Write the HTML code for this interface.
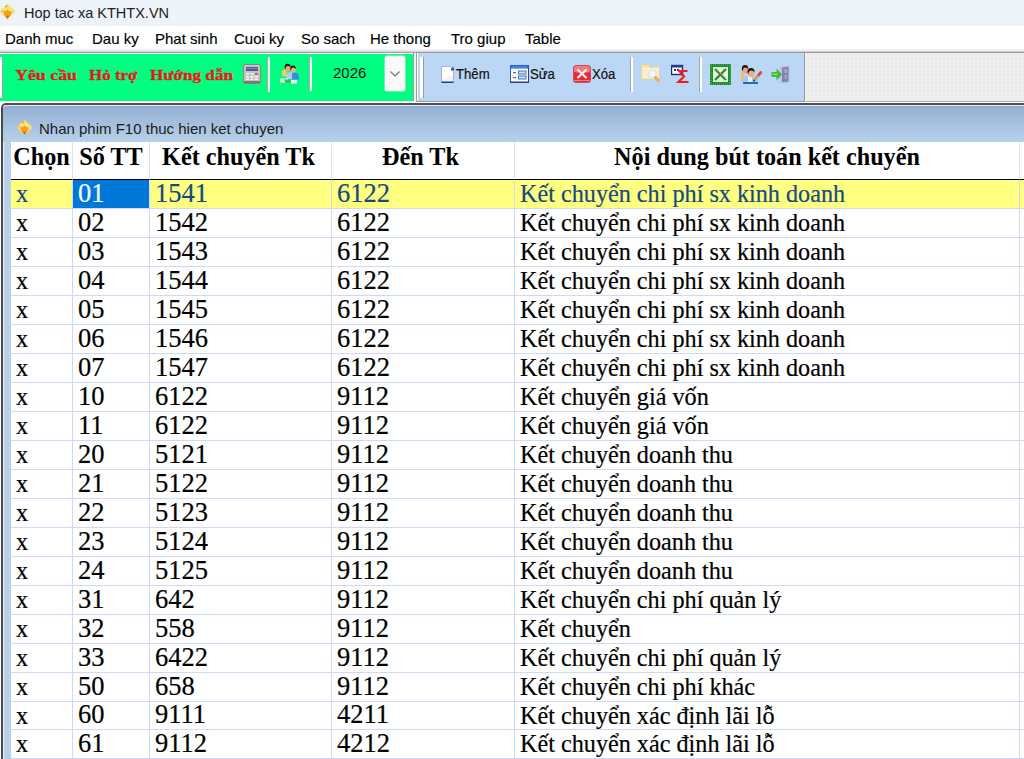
<!DOCTYPE html>
<html><head><meta charset="utf-8">
<style>
*{margin:0;padding:0;box-sizing:border-box}
html,body{width:1024px;height:759px;overflow:hidden;background:#fff;font-family:"Liberation Sans",sans-serif}
.abs{position:absolute}
#title{left:0;top:0;width:1024px;height:26px;background:#eef2f9}
#title .t{left:24px;top:3px;font-size:14.5px;color:#222;white-space:nowrap;line-height:20px}
#menu{left:0;top:26px;width:1024px;height:23px;background:#fff}
#menu span{position:absolute;top:4px;font-size:15px;line-height:18px;color:#000;white-space:nowrap;-webkit-text-stroke:0.15px #000}
#band{left:0;top:49px;width:1024px;height:54px;background:#e6e6e6}
#green{left:0;top:53px;width:415px;height:49px;background:#00f582;border-top:1px solid #8a8a8a;border-bottom:1px solid #fff}
#blue{left:416px;top:52px;width:390px;height:50px;background:#bdd7f5;border:1px solid #8c8c8c;border-right:2px solid #a0a0a0;border-bottom:1px solid #fff}
#rest{left:806px;top:53px;width:218px;height:49px;background:#efefef;border-top:1px solid #8c8c8c}
.red{color:#f0141e;font-family:"Liberation Serif",serif;font-weight:bold;font-size:15px;line-height:18px;white-space:nowrap;-webkit-text-stroke:0.3px #f0141e;transform-origin:0 0}
.sep{width:3px;border-left:2px solid #fff;border-right:1px solid #9a9a9a}
.tb{font-size:14px;color:#111;line-height:16px;white-space:nowrap;transform:scaleX(0.94);transform-origin:0 0;-webkit-text-stroke:0.2px #111}
#win{left:1px;top:103px;width:1030px;height:660px;background:#b8d0ea;border-left:2px solid #4a4a4a;border-top:2px solid #505050;border-top-left-radius:5px;box-shadow:inset 1px 0 0 #e4eef8}
#cap{left:3px;top:105px;width:1021px;height:37px;background:linear-gradient(#92afd2,#b8d1ea);border-top:1px solid #dde8f4;border-top-left-radius:4px}
#cap .t{left:36px;top:14px;font-size:15px;line-height:18px;color:#1a1a1a;white-space:nowrap}
#grid{left:11px;top:142px;width:1013px;height:617px;background:#fff;overflow:hidden}
table{border-collapse:separate;border-spacing:0;font-family:"Liberation Serif",serif;font-size:24.2px;table-layout:fixed;width:1030px}
td,th{border-right:1px solid #cfd8f6;border-bottom:1px solid #cfd8f6;white-space:nowrap;overflow:hidden;box-sizing:border-box}
th{height:38px;font-weight:bold;text-align:center;border-right:1px solid #e3e3e3;border-bottom:1px solid #000;vertical-align:middle;padding:0 0 7px 0;line-height:30px}
td{height:29px;padding:0 0 0 5px;line-height:28px;color:#000;vertical-align:middle;-webkit-text-stroke:0.2px currentColor}
td:nth-child(2),td:nth-child(3),td:nth-child(4){font-size:26.5px;padding-bottom:2px;line-height:26px}
tr.r28 td{height:28px;line-height:27px}
tr.r28 td:nth-child(2),tr.r28 td:nth-child(3),tr.r28 td:nth-child(4){line-height:25px}
tr.sel td{background:#ffff80;color:#134a80}
tr.sel td.cur{background:#0078d7;color:#fff}
</style></head><body>
<div id="title" class="abs">
  <svg class="abs" style="left:-1px;top:3px" width="18" height="18" viewBox="0 0 17 17">
 <path d="M8 0.5 L15.5 8 L8 15.5 L0.5 8Z" fill="#f2dc6a"/>
 <path d="M8 1.5 L14.5 8 L8 14.5 L1.5 8Z" fill="#f6e67c"/>
 <path d="M4 9 L5 7 L7 7.5 L8 6 L9.5 7.5 L11.5 7.5 L12 9.5 L10.5 12 L8 13.5 L5.5 12Z" fill="#f7a020"/>
 <path d="M6 12 L10 12 L8 15Z" fill="#d86a1a"/>
 <circle cx="7" cy="3" r="0.9" fill="#f08a20"/>
 <circle cx="3" cy="7.5" r="0.7" fill="#f08a20"/>
</svg>
  <div class="t abs">Hop tac xa KTHTX.VN</div>
</div>
<div id="menu" class="abs">
  <span style="left:5px">Danh muc</span>
  <span style="left:92px">Dau ky</span>
  <span style="left:155px">Phat sinh</span>
  <span style="left:234px">Cuoi ky</span>
  <span style="left:301px">So sach</span>
  <span style="left:370px">He thong</span>
  <span style="left:451px">Tro giup</span>
  <span style="left:525px">Table</span>
</div>
<div class="abs" style="left:0;top:49px;width:1024px;height:54px;background:#f0f0f0"></div>
<div class="abs" style="left:0;top:51px;width:1024px;height:1px;background:#d0d0d0"></div>
<div class="abs" style="left:0;top:52px;width:1024px;height:1px;background:#a4a4a4"></div>
<div class="abs" style="left:0;top:53px;width:414px;height:1px;background:#fff"></div>
<div class="abs" style="left:0;top:54px;width:413px;height:47px;background:#00ff80"></div>
<div class="abs" style="left:413px;top:52px;width:1px;height:50px;background:#9a9a9a"></div>
<div class="abs" style="left:0;top:101px;width:414px;height:1px;background:#fbeef4"></div>
<div class="abs" style="left:0;top:57px;width:3px;height:41px;background:#fff;border-right:1px solid #a0a0a0"></div>
<div class="abs red" style="left:15px;top:66px;transform:scaleX(1.19)">Yêu cầu</div>
<div class="abs red" style="left:89px;top:66px;transform:scaleX(1.13)">Hỏ trợ</div>
<div class="abs red" style="left:150px;top:66px;transform:scaleX(1.14)">Hướng dẫn</div>
<svg class="abs" style="left:243px;top:64px" width="18" height="20" viewBox="0 0 18 20">
 <rect x="0.5" y="0.5" width="17" height="19" rx="1.5" fill="#c4c4c4" stroke="#8a8a8a"/>
 <rect x="1" y="17" width="16" height="2.5" fill="#7a7a7a"/>
 <rect x="3" y="3" width="12" height="4" fill="#44608e"/>
 <rect x="3" y="4" width="12" height="1" fill="#6f8fbf"/>
 <g fill="#f4f4f4"><rect x="3" y="9" width="3" height="1.5"/><rect x="7.5" y="9" width="3" height="1.5"/><rect x="3" y="12" width="3" height="1.5"/><rect x="7.5" y="12" width="3" height="1.5"/><rect x="12" y="12" width="3" height="1.5"/><rect x="3" y="14.5" width="3" height="1.5"/><rect x="7.5" y="14.5" width="3" height="1.5"/><rect x="12" y="14.5" width="3" height="1.5"/></g>
 <rect x="12" y="9" width="3" height="1.5" fill="#e04040"/>
</svg>
<div class="abs" style="left:267px;top:57px;width:3px;height:35px;background:#fff;border-left:1px solid #a8a8a8"></div>
<svg class="abs" style="left:279px;top:63px" width="21" height="22" viewBox="0 0 21 22">
 <ellipse cx="5.5" cy="10" rx="2.6" ry="3.6" fill="#f4d050"/>
 <ellipse cx="8.6" cy="5" rx="2.9" ry="3.6" fill="#e4a878"/>
 <path d="M5.6 5 Q5.4 0.8 8.6 0.8 Q11.8 0.8 11.6 4.5 Q10.5 2.6 8.6 2.8 Q6.6 3 6.4 6Z" fill="#1e1410"/>
 <path d="M7.3 16 L7.3 10.5 Q10 8.5 13.6 9.5 L13.6 16Z" fill="#a8d0f8"/>
 <path d="M13 16.5 L13 10 Q16.5 8.5 19.5 11 L20 16.5Z" fill="#3c8ae8"/>
 <ellipse cx="14" cy="6.3" rx="2.8" ry="3.4" fill="#eab484"/>
 <path d="M11.2 6.5 Q11 2.5 14 2.5 Q17 2.5 16.8 6 Q15.8 4.3 14 4.5 Q12.2 4.7 12 7.5Z" fill="#1a120e"/>
 <rect x="1" y="15.5" width="8" height="4" fill="#eef2f4"/>
 <path d="M5 16.5 L12 16.5 L13 20 L6.5 20Z" fill="#2cc45a"/>
 <rect x="12" y="17" width="6" height="3.5" fill="#eef0f4"/>
</svg>
<div class="abs" style="left:309px;top:57px;width:3px;height:34px;background:#fff;border-left:1px solid #a8a8a8"></div>
<div class="abs" style="left:333px;top:64px;font-size:15px;line-height:18px;color:#111">2026</div>
<div class="abs" style="left:385px;top:56px;width:20px;height:35px;background:#f9f9f9;border-radius:2px;box-shadow:0 0 0 0.5px #e0e0e0"></div>
<svg class="abs" style="left:389px;top:70px" width="12" height="8" viewBox="0 0 12 8"><path d="M1.5 1.5 L6 6 L10.5 1.5" fill="none" stroke="#777" stroke-width="1.2"/></svg>

<div class="abs" style="left:416px;top:52px;width:389px;height:50px;background:#bcd7f5;border:1px solid #999;border-left-color:#a0a0a0"></div>
<div class="abs" style="left:417px;top:53px;width:1px;height:48px;background:#fff"></div>
<div class="abs" style="left:420px;top:57px;width:4px;height:41px;background:#fff;border-right:1px solid #9a9a9a"></div>
<svg class="abs" style="left:441px;top:66px" width="14" height="17" viewBox="0 0 14 17">
 <path d="M0.5 0.5 L10 0.5 L12.5 3 L12.5 16.5 L0.5 16.5Z" fill="#ffffff" stroke="#a4b4dc"/>
 <path d="M1 14 L12 9 L12 16 L1 16Z" fill="#f0f2fa"/>
 <rect x="0.5" y="15.5" width="12" height="1.5" fill="#1e3a80"/>
 <circle cx="11.5" cy="3" r="1.7" fill="#2a4a8c"/>
 <circle cx="11" cy="2.6" r="0.6" fill="#c0d0f0"/>
</svg>
<div class="abs tb" style="left:456px;top:66px">Thêm</div>
<svg class="abs" style="left:510px;top:65px" width="19" height="18" viewBox="0 0 19 18">
 <rect x="0.5" y="0.5" width="18" height="17" fill="#fbf8ec" stroke="#3a5cb0"/>
 <rect x="0" y="0" width="19" height="3.5" fill="#1f62c8"/>
 <rect x="1.5" y="1.5" width="16" height="1" fill="#6aa4ec"/>
 <rect x="18" y="3" width="1" height="15" fill="#30409a"/>
 <rect x="0" y="16.5" width="19" height="1.5" fill="#2a3f98"/>
 <rect x="3" y="7" width="3" height="1.2" fill="#4a70c0"/><rect x="3" y="12" width="3" height="1.2" fill="#4a70c0"/>
 <rect x="8.5" y="6" width="7.5" height="3" fill="#d0e0f8" stroke="#3f78d0" stroke-width="1"/>
 <rect x="8.5" y="11" width="7.5" height="3" fill="#d0e0f8" stroke="#3f78d0" stroke-width="1"/>
</svg>
<div class="abs tb" style="left:530px;top:66px">Sửa</div>
<svg class="abs" style="left:573px;top:65px" width="18" height="18" viewBox="0 0 18 18">
 <rect x="0.5" y="0.5" width="17" height="17" rx="2.5" fill="#ec2a32" stroke="#c05060"/>
 <rect x="1" y="1" width="16" height="6.5" rx="2" fill="#f27a78"/>
 <rect x="1" y="15" width="16" height="1" fill="#f08090"/>
 <path d="M4.5 4.5 L13.5 13 M13.5 4.5 L4.5 13" stroke="#e4eefa" stroke-width="2.2"/>
</svg>
<div class="abs tb" style="left:592px;top:66px">Xóa</div>
<div class="abs" style="left:630px;top:57px;width:3px;height:35px;background:#fff;border-left:1px solid #a8a8a8"></div>
<svg class="abs" style="left:641px;top:64px" width="21" height="20" viewBox="0 0 21 20">
 <path d="M0.5 0.5 L8 0.5 L9 3 L18.5 3 L18.5 15 L0.5 15Z" fill="#f6e4b0" stroke="#e6d4a0" stroke-width="1"/>
 <rect x="1" y="4" width="17" height="10.5" fill="#faeec8"/>
 <rect x="1" y="4" width="17" height="1" fill="#fff6dc"/>
 <circle cx="11.5" cy="10" r="3.8" fill="#f4f8ff" stroke="#d8dce8" stroke-width="1"/>
 <path d="M14.5 13.5 L17.5 16.5" stroke="#eab070" stroke-width="3.2" stroke-linecap="round"/>
</svg>
<svg class="abs" style="left:671px;top:64px" width="19" height="20" viewBox="0 0 19 20">
 <rect x="0.5" y="1.5" width="11" height="9" fill="#fff" stroke="#1c2a78" stroke-width="1.4"/>
 <rect x="0" y="1" width="12" height="2.5" fill="#2a3a90"/>
 <rect x="3" y="5" width="2" height="2" fill="#333"/><rect x="6" y="5" width="2" height="2" fill="#333"/>
 <path d="M16.5 7 L8.5 7 L13 12.5 L7.5 18 L17.5 18" fill="none" stroke="#ee1c1c" stroke-width="2.2"/>
</svg>
<div class="abs" style="left:699px;top:57px;width:3px;height:35px;background:#fff;border-left:1px solid #a8a8a8"></div>
<svg class="abs" style="left:710px;top:64px" width="21" height="21" viewBox="0 0 21 21">
 <rect x="0" y="0" width="21" height="21" fill="#1c8a2c"/>
 <rect x="1" y="1" width="19" height="19" fill="none" stroke="#58c858" stroke-width="1" stroke-dasharray="1 1"/>
 <rect x="3" y="3" width="15" height="15" fill="#e6f2da"/>
 <path d="M5 5 L16 16 M16 5 L5 16" stroke="#2a8a38" stroke-width="2.4"/>
 <path d="M6 5 L16 15" stroke="#60b868" stroke-width="0.8"/>
</svg>
<svg class="abs" style="left:741px;top:65px" width="21" height="20" viewBox="0 0 21 20">
 <rect x="0" y="8" width="2.6" height="9" rx="1" fill="#f6c63a"/>
 <ellipse cx="4" cy="5" rx="3" ry="3.6" fill="#e6a878"/>
 <path d="M0.8 5 Q0.6 0 4 0 Q7.4 0 7.2 4 Q6 2.2 4 2.4 Q2 2.6 1.8 6Z" fill="#1e1410"/>
 <rect x="2" y="11" width="15" height="8" fill="#a6caf4"/>
 <rect x="7" y="11" width="4" height="6" fill="#e8f0fa"/>
 <rect x="2" y="17" width="15" height="2" fill="#1c6ad0"/>
 <ellipse cx="10" cy="8.2" rx="3.4" ry="3.8" fill="#eab080"/>
 <path d="M6.4 8 Q6.2 3 10 3 Q13.8 3 13.6 7.5 Q12.5 5.2 10 5.4 Q7.6 5.6 7.4 9Z" fill="#1a120e"/>
 <path d="M12.5 16 L19 8.5" stroke="#d8a040" stroke-width="2.6"/>
 <path d="M17.8 9.8 L19.8 7.5" stroke="#e04050" stroke-width="2.8" stroke-linecap="round"/>
 <path d="M12.6 16.2 L13.5 15" stroke="#303030" stroke-width="1.5"/>
</svg>
<svg class="abs" style="left:771px;top:65px" width="20" height="19" viewBox="0 0 20 19">
 <path d="M8.5 1.5 L18.5 0.5 L18.5 17.5 L8.5 18.5Z" fill="#c4c4cc"/>
 <path d="M11 2.5 L17.5 1.8 L17.5 16.5 L11 17.2Z" fill="#8282bc"/>
 <rect x="13.5" y="4" width="2.5" height="4" fill="#a8a8d8"/>
 <rect x="13.5" y="10" width="2.5" height="4" fill="#a0a0d0"/>
 <path d="M0.5 7 L5.5 7 L5.5 3.5 L11 9.5 L5.5 15.5 L5.5 12 L0.5 12Z" fill="#3cbc44"/>
 <path d="M2 8.8 L5 9.5 L7 8.8" stroke="#d8e040" stroke-width="1" fill="none"/>
</svg>
<div class="abs" style="left:806px;top:52px;width:218px;height:50px;background:#efefef;border-top:1px solid #999;border-bottom:1px solid #a8a8a8;background-image:radial-gradient(#e2e2e2 0.6px,transparent 0.8px);background-size:4px 4px"></div>
<div class="abs" style="left:0;top:102px;width:1024px;height:1px;background:#fff"></div>
<div id="win" class="abs"></div>
<div id="cap" class="abs"><svg class="abs" style="left:13px;top:13px" width="18" height="18" viewBox="0 0 17 17">
 <path d="M8 0.5 L15.5 8 L8 15.5 L0.5 8Z" fill="#f2dc6a"/>
 <path d="M8 1.5 L14.5 8 L8 14.5 L1.5 8Z" fill="#f6e67c"/>
 <path d="M4 9 L5 7 L7 7.5 L8 6 L9.5 7.5 L11.5 7.5 L12 9.5 L10.5 12 L8 13.5 L5.5 12Z" fill="#f7a020"/>
 <path d="M6 12 L10 12 L8 15Z" fill="#d86a1a"/>
 <circle cx="7" cy="3" r="0.9" fill="#f08a20"/>
 <circle cx="3" cy="7.5" r="0.7" fill="#f08a20"/>
</svg><div class="t abs">Nhan phim F10 thuc hien ket chuyen</div></div>
<div id="grid" class="abs">
<table>
<colgroup><col style="width:62px"><col style="width:77px"><col style="width:182px"><col style="width:183px"><col style="width:505px"><col style="width:21px"></colgroup>
<tr class="h"><th>Chọn</th><th>Số TT</th><th style="padding-right:4px">Kết chuyển Tk</th><th style="padding-right:5px">Đến Tk</th><th>Nội dung bút toán kết chuyển</th><th></th></tr>
<tr class="sel"><td>x</td><td class="cur">01</td><td>1541</td><td>6122</td><td>Kết chuyển chi phí sx kinh doanh</td><td></td></tr>
<tr><td>x</td><td>02</td><td>1542</td><td>6122</td><td>Kết chuyển chi phí sx kinh doanh</td><td></td></tr>
<tr><td>x</td><td>03</td><td>1543</td><td>6122</td><td>Kết chuyển chi phí sx kinh doanh</td><td></td></tr>
<tr><td>x</td><td>04</td><td>1544</td><td>6122</td><td>Kết chuyển chi phí sx kinh doanh</td><td></td></tr>
<tr><td>x</td><td>05</td><td>1545</td><td>6122</td><td>Kết chuyển chi phí sx kinh doanh</td><td></td></tr>
<tr><td>x</td><td>06</td><td>1546</td><td>6122</td><td>Kết chuyển chi phí sx kinh doanh</td><td></td></tr>
<tr><td>x</td><td>07</td><td>1547</td><td>6122</td><td>Kết chuyển chi phí sx kinh doanh</td><td></td></tr>
<tr><td>x</td><td>10</td><td>6122</td><td>9112</td><td>Kết chuyển giá vốn</td><td></td></tr>
<tr><td>x</td><td>11</td><td>6122</td><td>9112</td><td>Kết chuyển giá vốn</td><td></td></tr>
<tr><td>x</td><td>20</td><td>5121</td><td>9112</td><td>Kết chuyển doanh thu</td><td></td></tr>
<tr><td>x</td><td>21</td><td>5122</td><td>9112</td><td>Kết chuyển doanh thu</td><td></td></tr>
<tr><td>x</td><td>22</td><td>5123</td><td>9112</td><td>Kết chuyển doanh thu</td><td></td></tr>
<tr><td>x</td><td>23</td><td>5124</td><td>9112</td><td>Kết chuyển doanh thu</td><td></td></tr>
<tr><td>x</td><td>24</td><td>5125</td><td>9112</td><td>Kết chuyển doanh thu</td><td></td></tr>
<tr><td>x</td><td>31</td><td>642</td><td>9112</td><td>Kết chuyển chi phí quản lý</td><td></td></tr>
<tr><td>x</td><td>32</td><td>558</td><td>9112</td><td>Kết chuyển</td><td></td></tr>
<tr><td>x</td><td>33</td><td>6422</td><td>9112</td><td>Kết chuyển chi phí quản lý</td><td></td></tr>
<tr><td>x</td><td>50</td><td>658</td><td>9112</td><td>Kết chuyển chi phí khác</td><td></td></tr>
<tr class="r28"><td>x</td><td>60</td><td>9111</td><td>4211</td><td>Kết chuyển xác định lãi lỗ</td><td></td></tr>
<tr><td>x</td><td>61</td><td>9112</td><td>4212</td><td>Kết chuyển xác định lãi lỗ</td><td></td></tr>
</table>
</div>
</body></html>
